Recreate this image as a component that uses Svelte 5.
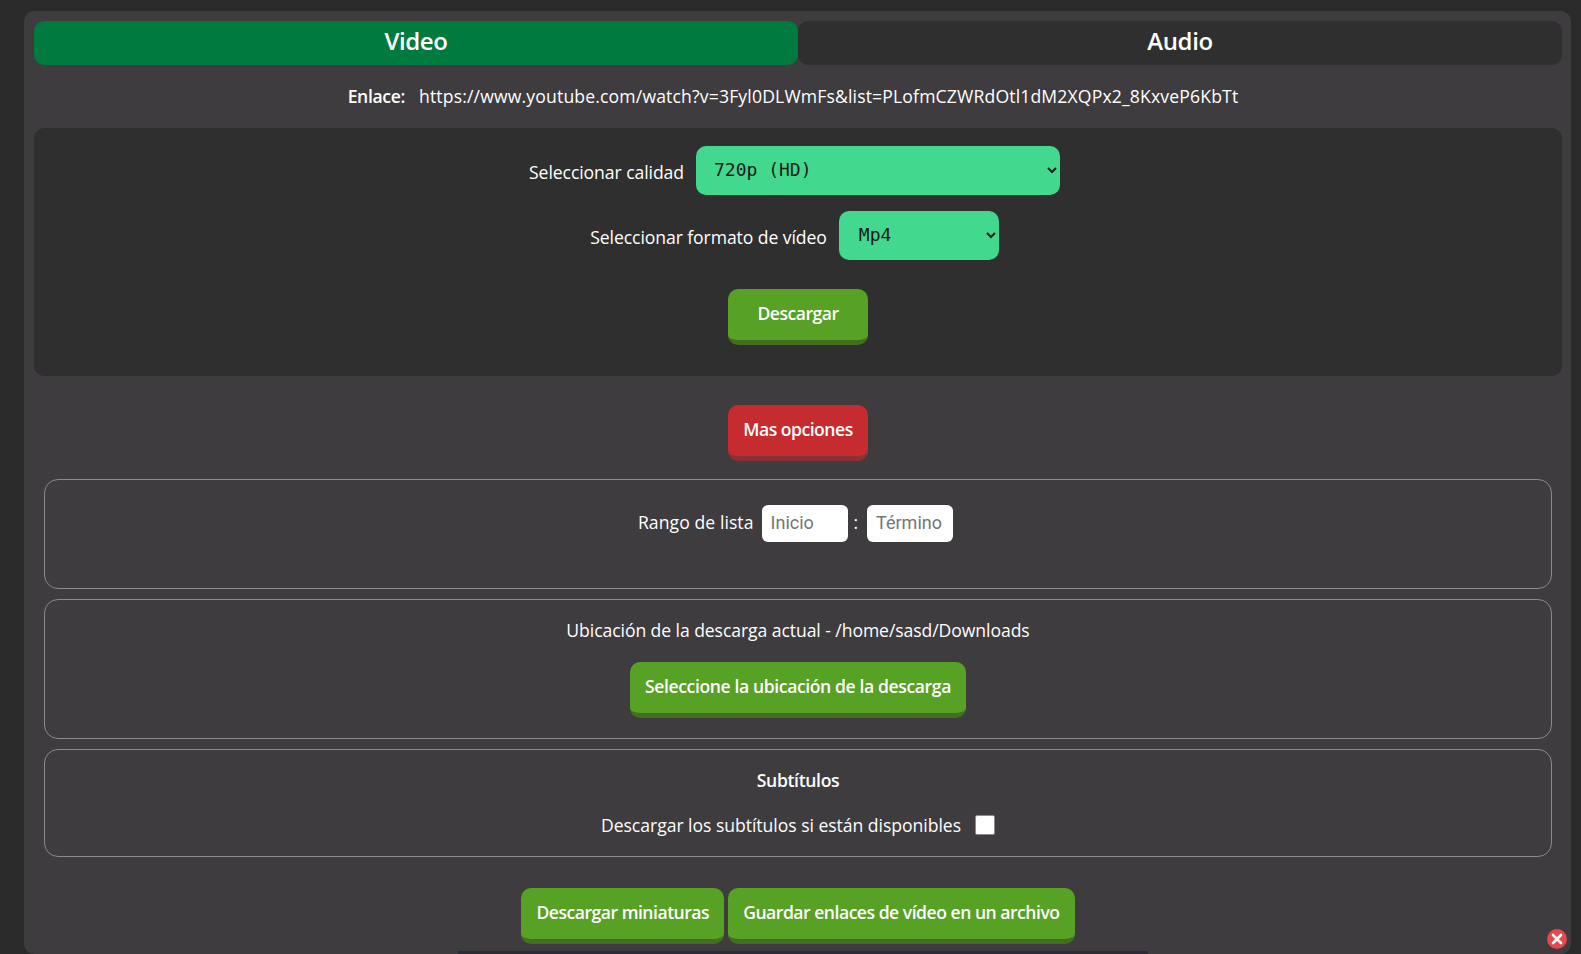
<script>
  let quality = $state("720");
  let format = $state("mp4");
  let subs = $state(false);
  let tab = $state("video");
</script>

<div class="page">
  <main class="panel">
    <div class="tabs">
      <button class="tab" class:active={tab === "video"} onclick={() => (tab = "video")}>Video</button>
      <button class="tab" class:active={tab === "audio"} onclick={() => (tab = "audio")}>Audio</button>
    </div>

    <p class="link"><b>Enlace:</b><span>https://www.youtube.com/watch?v=3Fyl0DLWmFs&amp;list=PLofmCZWRdOtl1dM2XQPx2_8KxveP6KbTt</span></p>

    <section class="options">
      <div class="row">
        <label for="quality">Seleccionar calidad</label>
        <select id="quality" class="quality" bind:value={quality}>
          <option value="720">720p (HD)</option>
          <option value="1080">1080p (FHD)</option>
          <option value="480">480p</option>
        </select>
      </div>
      <div class="row second">
        <label for="format">Seleccionar formato de vídeo</label>
        <select id="format" class="format" bind:value={format}>
          <option value="mp4">Mp4</option>
          <option value="mkv">Mkv</option>
        </select>
      </div>
      <div class="center download">
        <button class="btn wide">Descargar</button>
      </div>
    </section>

    <div class="center more">
      <button class="btn red wide">Mas opciones</button>
    </div>

    <section class="box range">
      <span class="range-label">Rango de lista</span>
      <input type="text" placeholder="Inicio" />
      <span class="colon">:</span>
      <input type="text" placeholder="Término" />
    </section>

    <section class="box location">
      <p>Ubicación de la descarga actual - /home/sasd/Downloads</p>
      <button class="btn">Seleccione la ubicación de la descarga</button>
    </section>

    <section class="box subtitles">
      <h3>Subtítulos</h3>
      <div class="check">
        <label for="subs">Descargar los subtítulos si están disponibles</label>
        <input id="subs" type="checkbox" bind:checked={subs} />
      </div>
    </section>

    <div class="center actions">
      <button class="btn">Descargar miniaturas</button>
      <button class="btn">Guardar enlaces de vídeo en un archivo</button>
    </div>

    <div class="bottom-bar"></div>
  </main>

  <button class="close" aria-label="Cerrar">
    <svg viewBox="0 0 20 20" width="20" height="20">
      <path d="M6 6l8 8M14 6l-8 8" stroke="#fff" stroke-width="2.6" stroke-linecap="round" fill="none" />
    </svg>
  </button>
</div>

<style>
  :global(body) {
    margin: 0;
    background: #2a2a2a;
    overflow: hidden;
  }

  .page {
    height: 954px;
    padding: 11px 10px 0 24px;
    box-sizing: border-box;
    overflow: hidden;
    position: relative;
    font-family: "Open Sans", "Noto Sans", sans-serif;
    font-size: 17.6px;
    letter-spacing: -0.08px;
    color: #fff;
  }

  .panel {
    height: 943px;
    box-sizing: border-box;
    padding: 10px 9px 0 10px;
    background: #3e3c3e;
    border-radius: 10px;
    overflow: hidden;
    position: relative;
  }

  .tabs {
    display: flex;
    height: 44px;
  }

  .tab {
    flex: 1;
    border: 0;
    border-radius: 10px;
    padding: 0 0 5px;
    background: #2f2f2f;
    color: #fff;
    font: inherit;
    font-size: 24px;
    font-weight: 600;
    letter-spacing: -0.4px;
  }

  .tab.active {
    background: #017a3f;
  }

  .link {
    margin: 0;
    height: 63px;
    padding-right: 10px;
    padding-bottom: 2px;
    box-sizing: border-box;
    display: flex;
    justify-content: center;
    align-items: center;
    gap: 14px;
  }

  .link b {
    font-weight: 600;
    letter-spacing: -0.35px;
  }

  .link span {
    letter-spacing: 0.15px;
  }

  .options {
    height: 248px;
    box-sizing: border-box;
    padding-top: 18px;
    background: #2f2f2f;
    border-radius: 10px;
  }

  .row {
    display: flex;
    justify-content: center;
    align-items: center;
    gap: 12px;
  }

  .row label {
    padding-top: 2px;
  }

  .row.second {
    margin-top: 16px;
  }

  select {
    height: 49px;
    margin-right: 7px;
    border: 0;
    border-radius: 10px;
    padding: 0 14px 2px;
    background: #42d98f;
    color: #1a1a1a;
    font-family: "DejaVu Sans Mono", monospace;
    font-size: 18px;
    letter-spacing: 0;
  }

  .quality {
    width: 364px;
  }

  .format {
    width: 160px;
    padding-left: 16px;
  }

  .center {
    display: flex;
    justify-content: center;
    gap: 4px;
  }

  .download {
    margin-top: 29px;
  }

  .btn {
    height: 56px;
    padding: 0 15px 3px;
    border: 0;
    border-bottom: 5px solid #437020;
    border-radius: 10px;
    box-sizing: border-box;
    background: #57a125;
    color: #fff;
    font: inherit;
    font-weight: 600;
    letter-spacing: -0.5px;
    white-space: nowrap;
  }

  .btn.wide {
    width: 140px;
    padding-left: 0;
    padding-right: 0;
  }

  .btn.red {
    background: #c62b30;
    border-bottom-color: #8b3136;
  }

  .more {
    margin-top: 29px;
  }

  .box {
    margin: 0 10px 10px;
    border: 1px solid #8a8a8a;
    border-radius: 14px;
    box-sizing: border-box;
  }

  .range {
    margin-top: 18px;
    height: 110px;
    padding-top: 25px;
    padding-right: 5px;
    display: flex;
    justify-content: center;
    align-items: flex-start;
  }

  .range span {
    line-height: 35px;
  }

  .range-label {
    letter-spacing: 0.07px;
    margin-right: -1px;
  }

  .range input {
    width: 86px;
    height: 37px;
    box-sizing: border-box;
    margin-left: 9px;
    padding: 0 9px 2px;
    border: 0;
    border-radius: 6px;
    background: #fff;
    font-family: Roboto, sans-serif;
    font-size: 18px;
    letter-spacing: 0;
  }

  .range input::placeholder {
    color: #757575;
  }

  .range .colon {
    margin-left: 6px;
  }

  .location {
    height: 140px;
    padding-top: 18px;
    text-align: center;
  }

  .location p {
    margin: 0 0 20px;
    line-height: 24px;
  }

  .location .btn {
    letter-spacing: -0.4px;
  }

  .subtitles {
    height: 108px;
    padding-top: 18px;
    text-align: center;
  }

  .subtitles h3 {
    margin: 0 0 21px;
    font: inherit;
    font-weight: 600;
    letter-spacing: -0.35px;
    line-height: 24px;
  }

  .check {
    display: flex;
    justify-content: center;
    align-items: center;
    gap: 14px;
  }

  .check label {
    letter-spacing: -0.04px;
  }

  .check input {
    appearance: none;
    width: 20px;
    height: 20px;
    margin: 0;
    background: #fff;
    border: 1px solid #8a8a8a;
    border-radius: 2px;
    box-sizing: border-box;
  }

  .actions {
    margin-top: 31px;
  }

  .bottom-bar {
    position: absolute;
    left: 434px;
    bottom: 0;
    width: 690px;
    height: 3px;
    background: #2a2c38;
  }

  .close {
    position: absolute;
    right: 14px;
    bottom: 5px;
    width: 20px;
    height: 20px;
    padding: 0;
    border: 0;
    border-radius: 50%;
    background: #e5484d;
    display: flex;
  }
</style>
